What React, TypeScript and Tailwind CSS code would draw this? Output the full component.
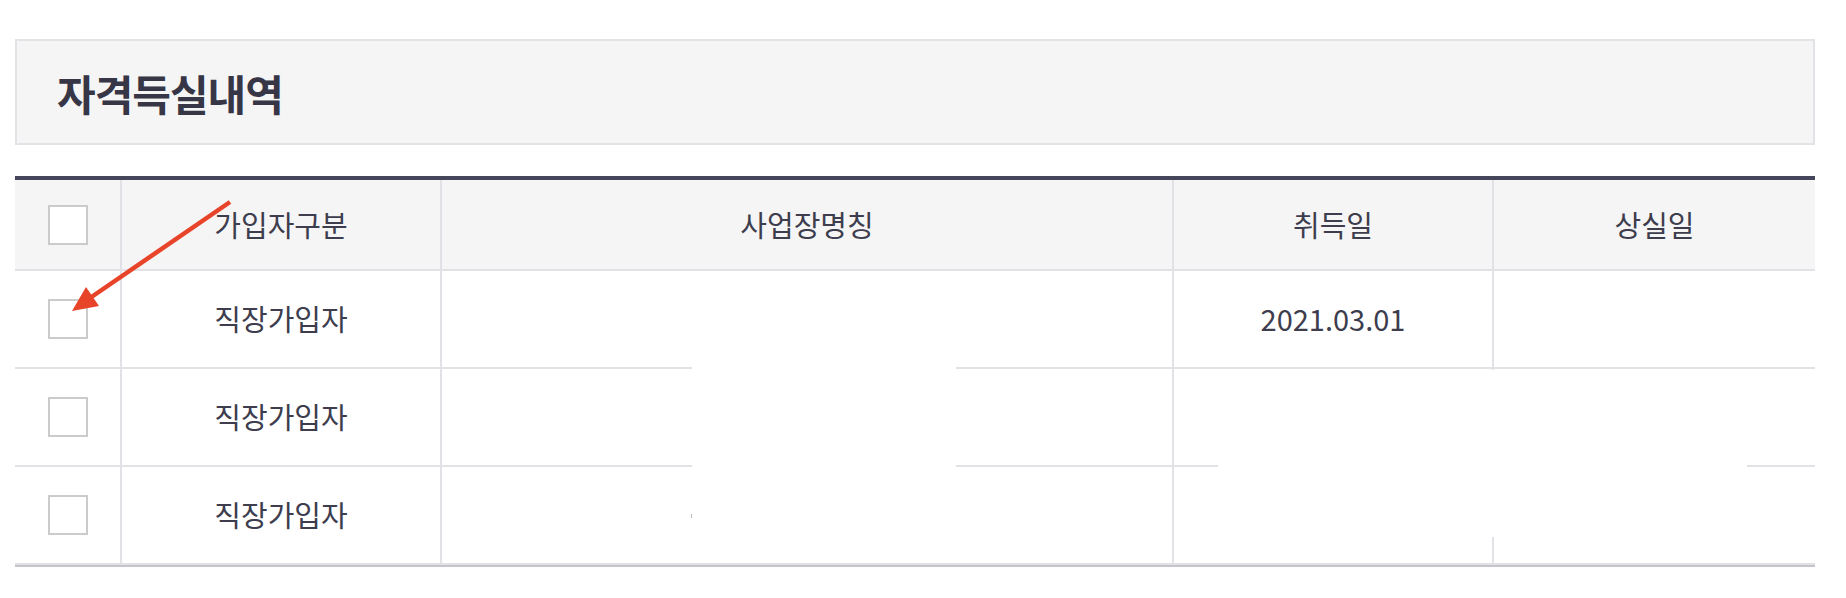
const font = { fontFamily: '"Noto Sans CJK KR", "Noto Sans", sans-serif' };

const rows = [
  { type: '직장가입자', name: '', start: '2021.03.01', end: '' },
  { type: '직장가입자', name: '', start: '', end: '' },
  { type: '직장가입자', name: '', start: '', end: '' },
];

function Box() {
  return <div className="h-10 w-10 border-2 border-[#cbcbcb] bg-white" />;
}

export default function App() {
  return (
    <div className="relative min-h-[598px] w-[1846px] bg-white pt-[39px] pl-[15px]" style={font}>
      <div className="w-[1800px]">
        <div className="flex h-[106px] items-center border-2 border-[#e2e2e7] bg-[#f5f5f5] pl-[40px]">
          <h2 className="text-[42px] font-bold tracking-[-1px] text-[#363646]">자격득실내역</h2>
        </div>

        <div className="mt-[31px] border-t-4 border-b-2 border-t-[#45465a] border-b-[#c4c4cb] text-[29px] text-[#3d3d4e]">
          <div className="grid h-[91px] grid-cols-[107px_320px_732px_320px_1fr] border-b-2 border-[#e1e1e6] bg-[#f5f5f5]">
            <div className="flex items-center justify-center border-r-2 border-[#e1e1e6]">
              <Box />
            </div>
            <div className="flex items-center justify-center border-r-2 border-[#e1e1e6]">가입자구분</div>
            <div className="flex items-center justify-center border-r-2 border-[#e1e1e6]">사업장명칭</div>
            <div className="flex items-center justify-center border-r-2 border-[#e1e1e6]">취득일</div>
            <div className="flex items-center justify-center">상실일</div>
          </div>
          {rows.map((r, i) => (
            <div
              key={i}
              className="grid h-[98px] grid-cols-[107px_320px_732px_320px_1fr] border-b-2 border-[#e1e1e6]"
            >
              <div className="flex items-center justify-center border-r-2 border-[#e1e1e6]">
                <Box />
              </div>
              <div className="flex items-center justify-center border-r-2 border-[#e1e1e6]">{r.type}</div>
              <div className="flex items-center justify-center border-r-2 border-[#e1e1e6]">{r.name}</div>
              <div className="flex items-center justify-center border-r-2 border-[#e1e1e6]">{r.start}</div>
              <div className="flex items-center justify-center">{r.end}</div>
            </div>
          ))}
        </div>
      </div>

      {/* redacted areas */}
      <div className="absolute top-[300px] left-[692px] h-[255px] w-[264px] bg-white" />
      <div className="absolute top-[514px] left-[691px] h-[4px] w-px bg-[#bdbdbd]" />
      <div className="absolute top-[370px] left-[1218px] h-[167px] w-[529px] bg-white" />

      {/* annotation arrow */}
      <svg className="pointer-events-none absolute top-0 left-0" width="1846" height="598">
        <line x1="230" y1="202" x2="90" y2="298" stroke="#e8442a" strokeWidth="4.5" strokeLinecap="butt" />
        <polygon points="72,311 86,287 99,306" fill="#e8442a" />
      </svg>
    </div>
  );
}
